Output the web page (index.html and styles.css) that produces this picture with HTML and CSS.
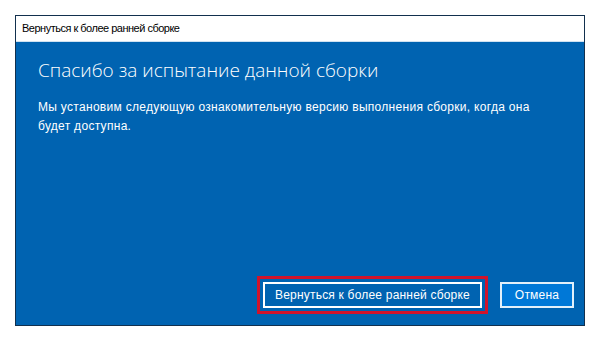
FILE: index.html
```html
<!DOCTYPE html>
<html lang="ru">
<head>
    <meta charset="UTF-8">
    <title>Вернуться к более ранней сборке</title>
    <link rel="stylesheet" href="styles.css">
</head>
<body>
	<div class="dialog">
		<div class="dialog-title">Вернуться к более ранней сборке</div>
		<div class="dialog-body">
			<div class="dialog-content">
				<div class="heading">Спасибо за испытание данной сборки</div>
				<div class="message">
					Мы установим следующую ознакомительную версию выполнения сборки, когда она
					будет доступна.
				</div>
			</div>
			<div class="actions">
				<button class="action action-primary">Вернуться к более ранней сборке</button>
				<button class="action action-cancel">Отмена</button>
			</div>
		</div>
	</div>
</body>
</html>
```

FILE: styles.css
```css
		body {
			margin: 0;
			padding: 15px;
			background: #ffffff;
			font-family: "Liberation Sans", Arial, sans-serif;
		}

		.dialog {
			width: 568px;
			height: 309px;
			border: 1px solid #12304e;
			display: flex;
			flex-direction: column;
		}

		.dialog-title {
			height: 25px;
			line-height: 25px;
			padding-left: 6px;
			font-size: 11px;
			letter-spacing: -0.5px;
			color: #000000;
			background: #ffffff;
			border-bottom: 1px solid #cfe2f1;
		}

		.dialog-body {
			flex: 1;
			background: #0063b1;
			color: #ffffff;
			display: flex;
			flex-direction: column;
			justify-content: space-between;
			padding: 0 10px 17px 22px;
		}

		.heading {
			margin-top: 16px;
			font-family: "Open Sans", sans-serif;
			font-weight: 300;
			font-size: 19px;
			line-height: 24px;
		}

		.message {
			margin-top: 16px;
			font-size: 12px;
			letter-spacing: 0.3px;
			line-height: 19px;
			width: 510px;
		}

		.actions {
			display: flex;
			justify-content: flex-end;
			gap: 18px;
		}

		.action {
			height: 26px;
			padding: 0 8px;
			font-family: "Liberation Sans", Arial, sans-serif;
			font-size: 12px;
			letter-spacing: 0.2px;
			color: #ffffff;
			border: 2px solid #ffffff;
			background: #0063b1;
		}

		.action-primary {
			width: 219px;
			outline: 3px solid #d0142c;
			outline-offset: 3px;
		}

		.action-cancel {
			width: 74px;
			background: #0078d7;
			border-color: #e3f0fa;
		}
```
